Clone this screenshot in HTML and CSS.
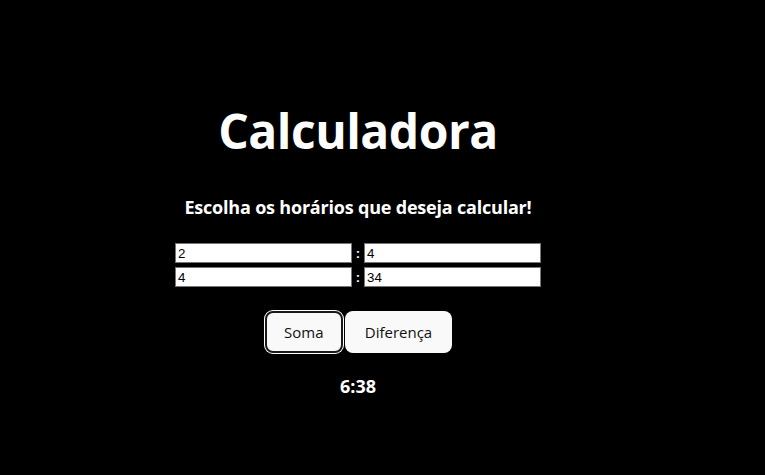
FILE: index.html
```html
<!DOCTYPE html>
<html lang="pt-BR">
<head>
<meta charset="utf-8">
<title>Calculadora</title>
<link rel="stylesheet" href="styles.css">
</head>
<body>
<div class="app">
  <h1 class="title">Calculadora</h1>
  <h3 class="subtitle">Escolha os horários que deseja calcular!</h3>
  <div class="rows">
    <div class="row">
      <input class="field" type="text" value="2">
      <span class="colon">:</span>
      <input class="field" type="text" value="4">
    </div>
    <div class="row">
      <input class="field" type="text" value="4">
      <span class="colon">:</span>
      <input class="field" type="text" value="34">
    </div>
  </div>
  <div class="buttons">
    <button class="btn btn-focus">Soma</button>
    <button class="btn">Diferença</button>
  </div>
  <p class="result">6:38</p>
</div>
</body>
</html>
```

FILE: styles.css
```css
html, body {
  background: #000;
}
body {
  margin: 8px;
  font-family: "Open Sans", "Noto Sans", sans-serif;
  color: #fff;
}
.app {
  width: 700px;
  text-align: center;
  padding-top: 95px;
}
.title {
  margin: 0;
  font-size: 48px;
  line-height: 56px;
  font-weight: 700;
  letter-spacing: -0.5px;
}
.subtitle {
  margin: 36px 0 0;
  font-size: 18px;
  line-height: 24px;
  font-weight: 700;
  letter-spacing: -0.2px;
}
.rows {
  margin-top: 24px;
  display: flex;
  flex-direction: column;
  align-items: center;
  gap: 4px;
}
.row {
  display: flex;
  align-items: center;
  gap: 0;
}
.field {
  box-sizing: border-box;
  width: 177px;
  height: 20px;
  margin: 0;
  padding: 1px 2px;
  border: 1px solid #767676;
  background: #fff;
  color: #000;
  font-family: "Liberation Sans", Arial, sans-serif;
  font-size: 13.33px;
}
.colon {
  width: 12px;
  font-family: "Liberation Sans", Arial, sans-serif;
  font-size: 13px;
  font-weight: 700;
  color: #fff;
  text-align: center;
}
.buttons {
  margin-top: 24px;
  display: flex;
  justify-content: center;
  gap: 2px;
}
.btn {
  box-sizing: border-box;
  height: 42px;
  padding: 0 19px;
  border: 1px solid transparent;
  border-radius: 8px;
  background: #f9f9f9;
  color: #111;
  font-family: "Open Sans", "Noto Sans", sans-serif;
  font-size: 15px;
  font-weight: 500;
}
.btn-focus {
  width: 78px;
  margin: 0 0 0 1px;
  border: 2px solid #1a1a1a;
  box-shadow: 0 0 0 1px #fff;
  padding: 0;
}
.result {
  margin: 21px 0 0;
  font-size: 18px;
  line-height: 24px;
  font-weight: 700;
}
```
